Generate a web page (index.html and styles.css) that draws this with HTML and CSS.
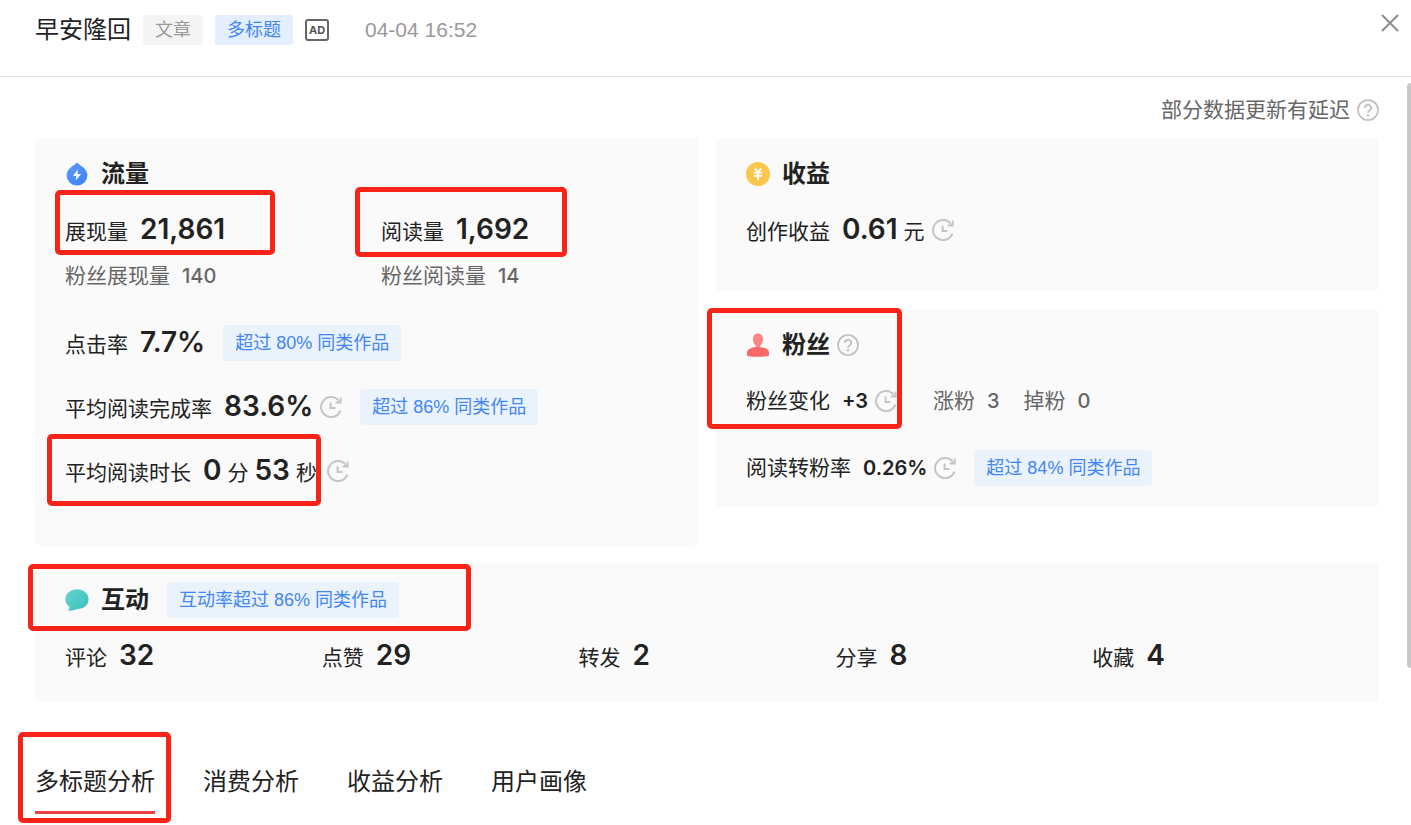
FILE: index.html
```html
<!DOCTYPE html>
<html lang="zh-CN">
<head>
    <meta charset="UTF-8">
    <meta name="viewport" content="width=device-width, initial-scale=1.0">
    <title>早安隆回</title>
    <link rel="stylesheet" href="styles.css">
</head>
<body>
    <!-- shared icons -->
    <svg class="sprite" aria-hidden="true">
        <symbol id="icon-clock" viewBox="0 0 22 22">
            <path d="M18.8 4.8A10 10 0 1 0 20.4 14.6" fill="none" stroke="#c4c4c4" stroke-width="2"/>
            <path d="M21.6 1.4V7.6H15.6V5.8L19.8 5V1.4Z" fill="#c4c4c4"/>
            <path d="M10.6 6.4V12H15.4" fill="none" stroke="#c4c4c4" stroke-width="2"/>
        </symbol>
        <symbol id="icon-help" viewBox="0 0 22 22">
            <circle cx="11" cy="11" r="10" fill="none" stroke="#bdbdbd" stroke-width="1.7"/>
            <path d="M7.9 9A3.1 3.1 0 1 1 12.6 11.5Q11 12.4 11 13.6" fill="none" stroke="#bdbdbd" stroke-width="1.8"/>
            <circle cx="11" cy="16.2" r="1.2" fill="#bdbdbd"/>
        </symbol>
    </svg>

    <header class="header">
        <h1>早安隆回</h1>
        <span class="tag tag-gray">文章</span>
        <span class="tag tag-blue">多标题</span>
        <span class="ad">AD</span>
        <time class="time">04-04 16:52</time>
        <button class="close" aria-label="关闭">
            <svg width="18" height="18" viewBox="0 0 18 18"><path d="M1 1L17 17M17 1L1 17" stroke="#8c8c8c" stroke-width="2" fill="none"/></svg>
        </button>
    </header>

    <main class="content">
        <p class="notice">部分数据更新有延迟 <svg class="icon"><use href="#icon-help"/></svg></p>

        <div class="cards">
            <section class="card traffic">
                <h2 class="card-title">
                    <svg class="title-icon" viewBox="0 0 24 24">
                        <defs><linearGradient id="blue" x1="0" y1="0" x2="1" y2="1"><stop offset="0" stop-color="#5c9cf8"/><stop offset="1" stop-color="#3a7ff5"/></linearGradient></defs>
                        <path d="M12 0.5C14.5 3.2 22.4 6.5 22.4 13.2A10.4 10.4 0 0 1 1.6 13.2C1.6 6.5 9.5 3.2 12 0.5Z" fill="url(#blue)"/>
                        <path d="M12.8 7.6L8 14H11.3L10.8 18.6L16 12H12.6Z" fill="#fff"/>
                    </svg>
                    流量
                </h2>
                <div class="rows">
                    <div class="pair">
                        <div>
                            <div class="row"><span class="stat">展现量 <b>21,861</b></span></div>
                            <div class="row sub"><span class="stat">粉丝展现量 <b>140</b></span></div>
                        </div>
                        <div>
                            <div class="row"><span class="stat">阅读量 <b>1,692</b></span></div>
                            <div class="row sub"><span class="stat">粉丝阅读量 <b>14</b></span></div>
                        </div>
                    </div>
                    <div class="row"><span class="stat">点击率 <b>7.7%</b></span><span class="rank">超过 80% 同类作品</span></div>
                    <div class="row"><span class="stat">平均阅读完成率 <b>83.6%</b></span><svg class="icon"><use href="#icon-clock"/></svg><span class="rank">超过 86% 同类作品</span></div>
                    <div class="row duration"><span class="stat">平均阅读时长 <b>0</b><i>分</i><b>53</b><i>秒</i></span><svg class="icon"><use href="#icon-clock"/></svg></div>
                </div>
            </section>

            <div class="side">
                <section class="card income">
                    <h2 class="card-title">
                        <svg class="title-icon" viewBox="0 0 24 24">
                            <circle cx="12" cy="12" r="12" fill="#fcc54b"/>
                            <path d="M8.8 6.4L12 10L15.2 6.4M12 10V18M7.8 10.6H16.2M7.8 13.8H16.2" fill="none" stroke="#fff" stroke-width="1.7"/>
                        </svg>
                        收益
                    </h2>
                    <div class="row"><span class="stat">创作收益 <b>0.61</b><i>元</i></span><svg class="icon"><use href="#icon-clock"/></svg></div>
                </section>

                <section class="card fans">
                    <h2 class="card-title">
                        <svg class="title-icon" viewBox="0 0 24 24">
                            <path d="M12 0.6C15.2 0.6 17 3 17 6.3C17 9.5 15.5 11.6 14 13V15H10V13C8.5 11.6 7 9.5 7 6.3C7 3 8.8 0.6 12 0.6Z" fill="#fa8584"/>
                            <path d="M1 19.5C1 16 6 14 12 14S23 16 23 19.5V21.5Q23 23 21.5 23.2Q12 24.4 2.5 23.2Q1 23 1 21.5Z" fill="#fb6868"/>
                        </svg>
                        粉丝
                        <svg class="icon"><use href="#icon-help"/></svg>
                    </h2>
                    <div class="rows">
                        <div class="row small">
                            <span class="stat">粉丝变化 <b>+3</b></span><svg class="icon"><use href="#icon-clock"/></svg>
                            <span class="changes">
                                <span class="stat">涨粉 <b>3</b></span>
                                <span class="stat">掉粉 <b>0</b></span>
                            </span>
                        </div>
                        <div class="row small"><span class="stat">阅读转粉率 <b>0.26%</b></span><svg class="icon"><use href="#icon-clock"/></svg><span class="rank">超过 84% 同类作品</span></div>
                    </div>
                </section>
            </div>

            <section class="card interact">
                <h2 class="card-title">
                    <svg class="title-icon" viewBox="0 0 24 24">
                        <defs><linearGradient id="teal" x1="0" y1="0" x2="1" y2="1"><stop offset="0" stop-color="#66d5d0"/><stop offset="1" stop-color="#38bfbb"/></linearGradient></defs>
                        <path d="M12 1.2C18.6 1.2 23.6 5.6 23.6 11.2S18.6 21 12.4 21Q8.5 23 3.8 22.8Q3 22.6 3.6 21.8Q4.8 20.2 4.4 18.8C1.8 17 .4 14.4 .4 11.2C.4 5.6 5.4 1.2 12 1.2Z" fill="url(#teal)"/>
                    </svg>
                    互动
                    <span class="rank">互动率超过 86% 同类作品</span>
                </h2>
                <div class="counts">
                    <span class="stat">评论 <b>32</b></span>
                    <span class="stat">点赞 <b>29</b></span>
                    <span class="stat">转发 <b>2</b></span>
                    <span class="stat">分享 <b>8</b></span>
                    <span class="stat">收藏 <b>4</b></span>
                </div>
            </section>
        </div>

        <nav class="tabs">
            <a href="#titles" class="active">多标题分析</a>
            <a href="#consume">消费分析</a>
            <a href="#income">收益分析</a>
            <a href="#users">用户画像</a>
        </nav>
    </main>

    <div class="scrollbar"></div>

    <!-- highlight frames -->
    <div class="mark mark-show"></div>
    <div class="mark mark-read"></div>
    <div class="mark mark-duration"></div>
    <div class="mark mark-fans"></div>
    <div class="mark mark-interact"></div>
    <div class="mark mark-tab"></div>
</body>
</html>
```
FILE: styles.css
```css
* {
    box-sizing: border-box;
}
body {
    position: relative;
    min-height: 100vh;
    margin: 0;
    background: #fff;
    color: #222;
    font-family: "Liberation Sans", "Noto Sans CJK SC", sans-serif;
    font-size: 21px;
    overflow-x: hidden;
}
h1, h2, p {
    margin: 0;
}
.sprite {
    position: absolute;
    width: 0;
    height: 0;
}
.icon {
    flex: none;
    width: 22px;
    height: 22px;
}

/* header */
.header {
    display: flex;
    align-items: center;
    gap: 12px;
    padding: 14px 12px 30px 35px;
    border-bottom: 1px solid #e4e4e4;
}
.header h1 {
    font-size: 24px;
    font-weight: 400;
    line-height: 32px;
}
.tag {
    padding: 0 12px;
    border-radius: 3px;
    font-size: 18px;
    line-height: 30px;
}
.tag-gray {
    background: #f4f4f4;
    color: #999;
}
.tag-blue {
    background: #e4effd;
    color: #4285f4;
}
.ad {
    width: 24px;
    border: 2px solid #666;
    border-radius: 3px;
    color: #555;
    font-family: Inter, sans-serif;
    font-size: 11px;
    font-weight: 700;
    line-height: 18px;
    text-align: center;
}
.time {
    margin-left: 24px;
    color: #999;
}
.close {
    align-self: flex-start;
    height: 18px;
    margin-left: auto;
    padding: 0;
    border: none;
    background: none;
    cursor: pointer;
}
.close svg {
    display: block;
}

/* cards */
.content {
    padding: 18px 32px 0 35px;
}
.notice {
    display: flex;
    align-items: center;
    justify-content: flex-end;
    gap: 7px;
    margin-bottom: 13px;
    color: #666;
    line-height: 30px;
}
.cards {
    display: grid;
    grid-template-columns: 1fr 1fr;
    align-items: start;
    gap: 19px 18px;
}
.side {
    display: grid;
    gap: 18px;
}
.card {
    padding: 18px 30px;
    border-radius: 4px;
    background: #fafafa;
}
.traffic {
    padding-bottom: 56px;
}
.income {
    padding-bottom: 43px;
}
.fans {
    padding-bottom: 21px;
}
.interact {
    grid-column: 1 / 3;
    padding-bottom: 28px;
}
.card-title {
    display: flex;
    align-items: center;
    height: 36px;
    margin-bottom: 20px;
    font-size: 24px;
    font-weight: 700;
    line-height: 36px;
}
.title-icon {
    width: 24px;
    height: 24px;
    margin-right: 12px;
}
.card-title .icon {
    margin-left: 7px;
}
.rows {
    display: grid;
    gap: 28px;
}
.fans .rows {
    gap: 31px;
}
.pair {
    display: grid;
    grid-template-columns: 316px 1fr;
    padding-bottom: 3px;
}
.row {
    display: flex;
    align-items: center;
    height: 36px;
}
.row .icon {
    margin-left: 7px;
}
.stat {
    display: flex;
    align-items: baseline;
    line-height: 34px;
}
.stat b {
    margin-left: 12px;
    font-family: Inter, sans-serif;
    font-size: 28px;
    font-weight: 600;
}
.stat i {
    margin-left: 6px;
    font-style: normal;
}
.stat i + b {
    margin-left: 6px;
}
.sub {
    margin-top: 10px;
    color: #666;
}
.sub b, .small b {
    font-size: 20px;
    font-weight: 500;
}
.small > .stat b {
    font-weight: 600;
}
.row.duration .icon {
    margin-left: 10px;
}
.changes {
    display: flex;
    gap: 24px;
    margin-left: 36px;
    color: #666;
}
.rank {
    margin-left: 18px;
    padding: 0 12px;
    border-radius: 3px;
    background: #eaf3fc;
    color: #4285f4;
    font-size: 18px;
    font-weight: 400;
    line-height: 36px;
}
.counts {
    display: grid;
    grid-template-columns: repeat(5, 1fr);
    align-items: center;
    height: 36px;
}

/* tabs */
.tabs {
    display: flex;
    gap: 48px;
    padding-top: 62px;
}
.tabs a {
    padding-bottom: 11px;
    border-bottom: 3px solid transparent;
    color: #222;
    font-size: 24px;
    line-height: 36px;
    text-decoration: none;
}
.tabs .active {
    border-color: #e8413f;
}

.scrollbar {
    position: absolute;
    top: 83px;
    right: 0;
    width: 4px;
    height: 585px;
    border-radius: 4px 0 0 4px;
    background: #c8c8c8;
}

/* highlight frames */
.mark {
    position: absolute;
    border: 5px solid #f82418;
    border-radius: 5px;
    pointer-events: none;
}
.mark-show {
    top: 190px;
    left: 55px;
    width: 220px;
    height: 65px;
}
.mark-read {
    top: 187px;
    left: 355px;
    width: 212px;
    height: 70px;
}
.mark-duration {
    top: 434px;
    left: 47px;
    width: 274px;
    height: 72px;
}
.mark-fans {
    top: 308px;
    left: 707px;
    width: 195px;
    height: 121px;
}
.mark-interact {
    top: 564px;
    left: 28px;
    width: 443px;
    height: 67px;
}
.mark-tab {
    top: 732px;
    left: 18px;
    width: 153px;
    height: 91px;
}
```
